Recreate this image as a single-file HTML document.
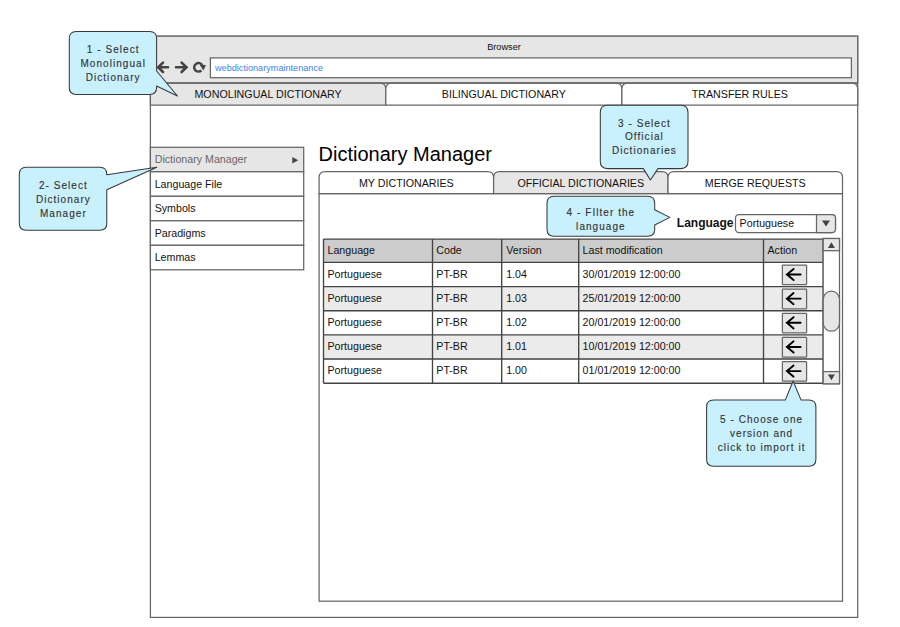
<!DOCTYPE html>
<html><head><meta charset="utf-8"><title>Dictionary Manager</title>
<style>html,body{margin:0;padding:0;background:#fff}svg{display:block;font-family:"Liberation Sans",sans-serif}</style>
</head><body>
<svg width="900" height="627" viewBox="0 0 900 627">
<rect x="150.4" y="36.2" width="707.30" height="581.20" fill="#fff" stroke="#666666" stroke-width="1.25"/>
<rect x="150.4" y="36.2" width="707.30" height="46.80" fill="#e6e6e6" stroke="#666666" stroke-width="1.25"/>
<rect x="210.4" y="57.9" width="641" height="19.8" fill="#fff" stroke="#666666" stroke-width="1.25"/>
<text x="504" y="49.6" font-size="9.2" text-anchor="middle" fill="#111111">Browser</text>
<text x="215" y="71" font-size="9.15" fill="#3d85e6">webdictionarymaintenance</text>
<g stroke="#444" stroke-width="2.6" fill="none" stroke-linecap="round" stroke-linejoin="miter"><path d="M168 67.3H158.6M163 62.6L158.2 67.3L163 72"/><path d="M176 67.3H186.2M181.6 62.6L186.5 67.3L181.6 72"/><path d="M201.4 70.5A4.3 4.3 0 1 1 202.3 65.3" stroke-width="2.4" stroke-linecap="butt"/></g><path d="M199.8 65H206L203.4 70.4Z" fill="#444"/>
<path d="M150.40 105V89Q150.40 83 156.40 83H379.80Q385.80 83 385.80 89V105Z" fill="#e6e6e6" stroke="#666666" stroke-width="1.25"/>
<text x="268.10" y="97.7" font-size="10.7" text-anchor="middle" fill="#111111">MONOLINGUAL DICTIONARY</text>
<path d="M385.80 105V89Q385.80 83 391.80 83H615.90Q621.90 83 621.90 89V105Z" fill="#fff" stroke="#666666" stroke-width="1.25"/>
<text x="503.85" y="97.7" font-size="10.7" text-anchor="middle" fill="#111111">BILINGUAL DICTIONARY</text>
<path d="M621.90 105V89Q621.90 83 627.90 83H851.70Q857.70 83 857.70 89V105Z" fill="#fff" stroke="#666666" stroke-width="1.25"/>
<text x="739.80" y="97.7" font-size="10.7" text-anchor="middle" fill="#111111">TRANSFER RULES</text>
<path d="M150.4 83H857.7" stroke="#666666" stroke-width="1.25"/>
<rect x="150.4" y="147.30" width="153.30" height="24.5" fill="#e6e6e6" stroke="#666666" stroke-width="1.25"/>
<text x="154.7" y="163.40" font-size="10.67" fill="#666">Dictionary Manager</text>
<rect x="150.4" y="171.80" width="153.30" height="24.5" fill="#fff" stroke="#666666" stroke-width="1.25"/>
<text x="154.7" y="187.90" font-size="10.67" fill="#111111">Language File</text>
<rect x="150.4" y="196.30" width="153.30" height="24.5" fill="#fff" stroke="#666666" stroke-width="1.25"/>
<text x="154.7" y="212.40" font-size="10.67" fill="#111111">Symbols</text>
<rect x="150.4" y="220.80" width="153.30" height="24.5" fill="#fff" stroke="#666666" stroke-width="1.25"/>
<text x="154.7" y="236.90" font-size="10.67" fill="#111111">Paradigms</text>
<rect x="150.4" y="245.30" width="153.30" height="24.5" fill="#fff" stroke="#666666" stroke-width="1.25"/>
<text x="154.7" y="261.40" font-size="10.67" fill="#111111">Lemmas</text>
<path d="M292.3 157V163.6L298.2 160.3Z" fill="#444"/>
<text x="318.5" y="161.1" font-size="20" fill="#000">Dictionary Manager</text>
<rect x="319.1" y="193.6" width="523.40" height="407.60" fill="#fff" stroke="#666666" stroke-width="1.25"/>
<path d="M319.10 193.6V177.6Q319.10 171.6 325.10 171.6H487.60Q493.60 171.6 493.60 177.6V193.6Z" fill="#fff" stroke="#666666" stroke-width="1.25"/>
<text x="406.35" y="186.8" font-size="10.7" text-anchor="middle" fill="#111111">MY DICTIONARIES</text>
<path d="M493.60 193.6V177.6Q493.60 171.6 499.60 171.6H662.00Q668.00 171.6 668.00 177.6V193.6Z" fill="#e6e6e6" stroke="#666666" stroke-width="1.25"/>
<text x="580.80" y="186.8" font-size="10.7" text-anchor="middle" fill="#111111">OFFICIAL DICTIONARIES</text>
<path d="M668.00 193.6V177.6Q668.00 171.6 674.00 171.6H836.50Q842.50 171.6 842.50 177.6V193.6Z" fill="#fff" stroke="#666666" stroke-width="1.25"/>
<text x="755.25" y="186.8" font-size="10.7" text-anchor="middle" fill="#111111">MERGE REQUESTS</text>
<text x="676.8" y="226.7" font-size="12" font-weight="bold" fill="#111111">Language</text>
<rect x="735.5" y="214.5" width="100" height="18" rx="3.5" fill="#fff" stroke="#666666" stroke-width="1.25"/>
<path d="M816.5 214.5H832Q835.5 214.5 835.5 218V229Q835.5 232.5 832 232.5H816.5Z" fill="#e6e6e6" stroke="#666666" stroke-width="1.25"/>
<path d="M822 220.6H830L826 226.6Z" fill="#444"/>
<text x="739.6" y="227.3" font-size="10.67" fill="#111111">Portuguese</text>
<rect x="323.5" y="239.1" width="499.70" height="23.30" fill="#cccccc"/>
<rect x="323.5" y="286.55" width="499.70" height="24.15" fill="#ebebeb"/>
<rect x="323.5" y="334.85" width="499.70" height="24.15" fill="#ebebeb"/>
<path d="M323.5 239.1H823.2M323.5 262.4H823.2M323.5 286.55H823.2M323.5 310.7H823.2M323.5 334.85H823.2M323.5 359.0H823.2M323.5 383.2H823.2M323.5 239.1V383.2M432.5 239.1V383.2M501.7 239.1V383.2M578.7 239.1V383.2M763.5 239.1V383.2M823.2 239.1V383.2" stroke="#444" stroke-width="1.35" fill="none"/>
<text x="327.50" y="254.1" font-size="10.67" fill="#111111">Language</text>
<text x="436.30" y="254.1" font-size="10.67" fill="#111111">Code</text>
<text x="506.20" y="254.1" font-size="10.67" fill="#111111">Version</text>
<text x="582.60" y="254.1" font-size="10.67" fill="#111111">Last modification</text>
<text x="767.50" y="254.1" font-size="10.67" fill="#111111">Action</text>
<text x="327.50" y="277.55" font-size="10.67" fill="#111111">Portuguese</text>
<text x="436.30" y="277.55" font-size="10.67" fill="#111111">PT-BR</text>
<text x="506.20" y="277.55" font-size="10.67" fill="#111111">1.04</text>
<text x="582.60" y="277.55" font-size="10.67" fill="#111111">30/01/2019 12:00:00</text>
<rect x="782.4" y="265.00" width="24.2" height="19.6" rx="0.6" fill="#e6e6e6" stroke="#666666" stroke-width="1.25"/>
<path d="M800.6 274.50H787.4M793.6 268.90L786.9 274.50L793.6 280.10" stroke="#000" stroke-width="1.9" fill="none" stroke-linecap="round" stroke-linejoin="miter"/>
<text x="327.50" y="301.70" font-size="10.67" fill="#111111">Portuguese</text>
<text x="436.30" y="301.70" font-size="10.67" fill="#111111">PT-BR</text>
<text x="506.20" y="301.70" font-size="10.67" fill="#111111">1.03</text>
<text x="582.60" y="301.70" font-size="10.67" fill="#111111">25/01/2019 12:00:00</text>
<rect x="782.4" y="289.15" width="24.2" height="19.6" rx="0.6" fill="#e6e6e6" stroke="#666666" stroke-width="1.25"/>
<path d="M800.6 298.65H787.4M793.6 293.05L786.9 298.65L793.6 304.25" stroke="#000" stroke-width="1.9" fill="none" stroke-linecap="round" stroke-linejoin="miter"/>
<text x="327.50" y="325.85" font-size="10.67" fill="#111111">Portuguese</text>
<text x="436.30" y="325.85" font-size="10.67" fill="#111111">PT-BR</text>
<text x="506.20" y="325.85" font-size="10.67" fill="#111111">1.02</text>
<text x="582.60" y="325.85" font-size="10.67" fill="#111111">20/01/2019 12:00:00</text>
<rect x="782.4" y="313.30" width="24.2" height="19.6" rx="0.6" fill="#e6e6e6" stroke="#666666" stroke-width="1.25"/>
<path d="M800.6 322.80H787.4M793.6 317.20L786.9 322.80L793.6 328.40" stroke="#000" stroke-width="1.9" fill="none" stroke-linecap="round" stroke-linejoin="miter"/>
<text x="327.50" y="350.00" font-size="10.67" fill="#111111">Portuguese</text>
<text x="436.30" y="350.00" font-size="10.67" fill="#111111">PT-BR</text>
<text x="506.20" y="350.00" font-size="10.67" fill="#111111">1.01</text>
<text x="582.60" y="350.00" font-size="10.67" fill="#111111">10/01/2019 12:00:00</text>
<rect x="782.4" y="337.45" width="24.2" height="19.6" rx="0.6" fill="#e6e6e6" stroke="#666666" stroke-width="1.25"/>
<path d="M800.6 346.95H787.4M793.6 341.35L786.9 346.95L793.6 352.55" stroke="#000" stroke-width="1.9" fill="none" stroke-linecap="round" stroke-linejoin="miter"/>
<text x="327.50" y="374.15" font-size="10.67" fill="#111111">Portuguese</text>
<text x="436.30" y="374.15" font-size="10.67" fill="#111111">PT-BR</text>
<text x="506.20" y="374.15" font-size="10.67" fill="#111111">1.00</text>
<text x="582.60" y="374.15" font-size="10.67" fill="#111111">01/01/2019 12:00:00</text>
<rect x="782.4" y="361.60" width="24.2" height="19.6" rx="0.6" fill="#e6e6e6" stroke="#666666" stroke-width="1.25"/>
<path d="M800.6 371.10H787.4M793.6 365.50L786.9 371.10L793.6 376.70" stroke="#000" stroke-width="1.9" fill="none" stroke-linecap="round" stroke-linejoin="miter"/>
<rect x="823.2" y="238.5" width="16.30" height="145.30" fill="#fff" stroke="#666666" stroke-width="1.25"/>
<rect x="823.2" y="238.5" width="16.30" height="12.2" fill="#e6e6e6" stroke="#666666" stroke-width="1.25"/>
<rect x="823.2" y="371.60" width="16.30" height="12.2" fill="#e6e6e6" stroke="#666666" stroke-width="1.25"/>
<path d="M827.9 247.9H834.9L831.4 242.2Z" fill="#444"/>
<path d="M827.9 374.6H834.9L831.4 380.3Z" fill="#444"/>
<rect x="823.2" y="291.2" width="16.30" height="40" rx="8.1" fill="#e6e6e6" stroke="#666666" stroke-width="1.25"/>
<path d="M76.3 31.4H149.6Q156.6 31.4 156.6 38.4V71L177.5 96L156.6 86V87.5Q156.6 94.5 149.6 94.5H76.3Q69.3 94.5 69.3 87.5V38.4Q69.3 31.4 76.3 31.4Z" fill="#c9f1fd" stroke="#36393d" stroke-width="1.05" stroke-linejoin="round"/>
<text x="113.2" y="53.4" font-size="10" letter-spacing="1.05" text-anchor="middle" fill="#333" stroke="#333" stroke-width="0.14">1 - Select</text>
<text x="113.2" y="67.2" font-size="10" letter-spacing="1.05" text-anchor="middle" fill="#333" stroke="#333" stroke-width="0.14">Monolingual</text>
<text x="113.2" y="80.8" font-size="10" letter-spacing="1.05" text-anchor="middle" fill="#333" stroke="#333" stroke-width="0.14">Dictionary</text>
<path d="M26.3 167.3H99.8Q106.8 167.3 106.8 174.3V174.7L156.8 167.2L106.8 189.7V223.3Q106.8 230.3 99.8 230.3H26.3Q19.3 230.3 19.3 223.3V174.3Q19.3 167.3 26.3 167.3Z" fill="#c9f1fd" stroke="#36393d" stroke-width="1.05" stroke-linejoin="round"/>
<text x="63.4" y="189.3" font-size="10" letter-spacing="1.05" text-anchor="middle" fill="#333" stroke="#333" stroke-width="0.14">2- Select</text>
<text x="63.4" y="203" font-size="10" letter-spacing="1.05" text-anchor="middle" fill="#333" stroke="#333" stroke-width="0.14">Dictionary</text>
<text x="63.4" y="216.5" font-size="10" letter-spacing="1.05" text-anchor="middle" fill="#333" stroke="#333" stroke-width="0.14">Manager</text>
<path d="M607.3 105.3H681Q688 105.3 688 112.3V161.6Q688 168.6 681 168.6H658L650.4 180L643.3 168.6H607.3Q600.3 168.6 600.3 161.6V112.3Q600.3 105.3 607.3 105.3Z" fill="#c9f1fd" stroke="#36393d" stroke-width="1.05" stroke-linejoin="round"/>
<text x="644.4" y="126.6" font-size="10" letter-spacing="1.05" text-anchor="middle" fill="#333" stroke="#333" stroke-width="0.14">3 - Select</text>
<text x="644.4" y="140.2" font-size="10" letter-spacing="1.05" text-anchor="middle" fill="#333" stroke="#333" stroke-width="0.14">Official</text>
<text x="644.4" y="153.7" font-size="10" letter-spacing="1.05" text-anchor="middle" fill="#333" stroke="#333" stroke-width="0.14">Dictionaries</text>
<path d="M554 196.3H647.7Q654.7 196.3 654.7 203.3V209.7L669.8 217.4L654.7 225V229.3Q654.7 236.3 647.7 236.3H554Q547 236.3 547 229.3V203.3Q547 196.3 554 196.3Z" fill="#c9f1fd" stroke="#36393d" stroke-width="1.05" stroke-linejoin="round"/>
<text x="600.9" y="215.5" font-size="10" letter-spacing="1.05" text-anchor="middle" fill="#333" stroke="#333" stroke-width="0.14">4 - FIlter the</text>
<text x="600.9" y="229.9" font-size="10" letter-spacing="1.05" text-anchor="middle" fill="#333" stroke="#333" stroke-width="0.14">language</text>
<path d="M713.6 399.9H785.4L793.1 381L801 399.9H808.9Q815.9 399.9 815.9 406.9V459.2Q815.9 466.2 808.9 466.2H713.6Q706.6 466.2 706.6 459.2V406.9Q706.6 399.9 713.6 399.9Z" fill="#c9f1fd" stroke="#36393d" stroke-width="1.05" stroke-linejoin="round"/>
<text x="761.6" y="423.3" font-size="10" letter-spacing="1.05" text-anchor="middle" fill="#333" stroke="#333" stroke-width="0.14">5 - Choose one</text>
<text x="761.6" y="437.1" font-size="10" letter-spacing="1.05" text-anchor="middle" fill="#333" stroke="#333" stroke-width="0.14">version and</text>
<text x="761.6" y="450.7" font-size="10" letter-spacing="1.05" text-anchor="middle" fill="#333" stroke="#333" stroke-width="0.14">click to import it</text>
</svg>
</body></html>
